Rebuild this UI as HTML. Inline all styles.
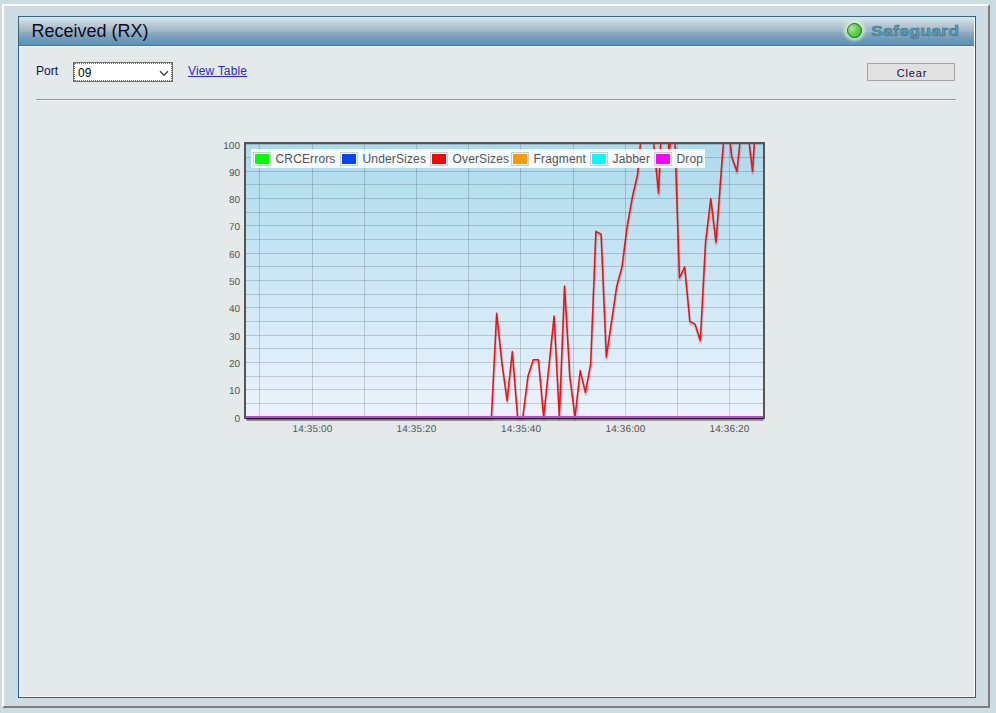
<!DOCTYPE html>
<html><head><meta charset="utf-8">
<style>
html,body{margin:0;padding:0;}
body{width:996px;height:713px;overflow:hidden;background:#cddce3;position:relative;font-family:"Liberation Sans",sans-serif;}
.frame{position:absolute;left:2px;top:4px;width:984px;height:700px;border-style:solid;border-width:2px;border-color:#ffffff #7c7c7c #7c7c7c #ffffff;background:#cddce3;}
.panel{position:absolute;left:18px;top:16px;width:956px;height:680px;border:1px solid #1b63a0;box-shadow:inset 0 0 0 1px #fafcfc;background:#e4e9ea;}
.hdr{position:absolute;left:19px;top:16px;width:955px;height:30px;background:linear-gradient(to bottom,#3d6578 0px,#3d6578 1px,#c6ecfc 1px,#c6ecfc 2px,#cae6f3 2px,#cae6f3 3px,#cce1ec 3px,#cce1ec 4px,#ccdce4 4px,#ccdce4 5px,#cad6dc 5px,#cad6dc 6px,#c7d2d6 6px,#c7d2d6 7px,#c4cfd2 7px,#c4cfd2 8px,#bccbd5 8px,#bccbd5 9px,#b6c8d5 9px,#b6c8d5 10px,#b0c4d3 10px,#b0c4d3 11px,#abc1d1 11px,#abc1d1 12px,#a7becf 12px,#a7becf 13px,#a4bccd 13px,#a4bccd 14px,#a2b9cb 14px,#a2b9cb 15px,#a0b4c4 15px,#a0b4c4 16px,#8dacc0 16px,#8dacc0 17px,#89aabf 17px,#89aabf 18px,#85a7be 18px,#85a7be 19px,#80a4bd 19px,#80a4bd 20px,#7ba1bc 20px,#7ba1bc 21px,#769fbc 21px,#769fbc 22px,#719cbb 22px,#719cbb 23px,#6c9abb 23px,#6c9abb 24px,#6898ba 24px,#6898ba 25px,#6497ba 25px,#6497ba 26px,#6096ba 26px,#6096ba 27px,#5d95b9 27px,#5d95b9 28px,#5a93b8 28px,#5a93b8 29px,#3b77a0 29px,#3b77a0 30px);}
.title{position:absolute;left:31.5px;top:21px;font-size:18px;color:#0c0c20;white-space:nowrap;}
.sg{position:absolute;left:847px;top:22.5px;width:15px;height:15px;box-sizing:border-box;border-radius:50%;border:1.6px solid #1f6f1f;background:radial-gradient(circle at 30% 35%,#b4e4a4 0,#62d24c 45%,#3fbe34 85%);box-shadow:0 0 3px 3px rgba(215,250,210,0.7);}
.sgt{position:absolute;left:871px;top:23px;font-size:14.5px;font-weight:bold;color:#5e9db3;letter-spacing:0.2px;transform:scaleX(1.215);transform-origin:left top;-webkit-text-stroke:0.55px #3a7388;white-space:nowrap;}
.lbl{position:absolute;font-size:12px;color:#10104a;white-space:nowrap;}
.sel{position:absolute;left:73px;top:62px;width:98px;height:18px;background:#fff;border:1px solid #6e6e6e;outline:1px dotted #7a7a7a;outline-offset:-2px;}
.sel .v{position:absolute;left:4px;top:3px;font-size:12px;color:#000;}
.link{position:absolute;left:188px;top:64px;font-size:12px;letter-spacing:0.15px;color:#2a2ad8;text-decoration:underline;white-space:nowrap;}
.btn{position:absolute;left:867px;top:63px;width:86px;height:16px;background:#e1e1e1;border:1px solid #a4a4a4;}
.btn span{position:absolute;left:2px;right:0;top:3px;text-align:center;font-size:11px;letter-spacing:0.8px;color:#101040;}
.hr1{position:absolute;left:36px;top:99px;width:920px;height:1px;background:#8c9c9c;}
.hr2{position:absolute;left:36px;top:100px;width:920px;height:1px;background:#f4f6f6;}
.yl{position:absolute;right:755.8px;font-size:10px;letter-spacing:0.1px;text-rendering:geometricPrecision;color:#545454;text-align:right;line-height:12px;}
.xl{position:absolute;width:60px;font-size:10px;letter-spacing:0.15px;text-rendering:geometricPrecision;color:#545454;text-align:center;line-height:12px;top:424px;}
.legend{position:absolute;left:251px;top:149px;height:19px;width:454px;background:rgba(255,255,255,0.9);}
.lg{position:absolute;top:152px;width:16px;height:12px;border:1px solid #ccc;}
.lg i{position:absolute;left:1px;top:1px;width:14px;height:10px;}
.lt{position:absolute;top:152px;font-size:12px;letter-spacing:0.15px;color:#545454;line-height:14px;white-space:nowrap;}
</style></head><body>
<div class="frame"></div>
<div class="panel"></div>
<div class="hdr"></div><div style="position:absolute;left:18px;top:16px;width:1px;height:30px;background:linear-gradient(#3e6579,#2f6890)"></div><div style="position:absolute;left:19px;top:46px;width:955px;height:1px;background:#f4f7f7"></div>
<div class="title">Received (RX)</div>
<div class="sg"></div>
<div class="sgt">Safeguard</div>
<div class="lbl" style="left:36px;top:64px;">Port</div>
<div class="sel"><span class="v">09</span><svg width="10" height="6" style="position:absolute;left:85px;top:6.5px" viewBox="0 0 10 6"><path d="M1 1.3L5 5.3L9 1.3" stroke="#3a3a3a" stroke-width="1.25" fill="none"/></svg></div>
<a class="link">View Table</a>
<div class="btn"><span>Clear</span></div>
<div class="hr1"></div><div class="hr2"></div>
<svg width="996" height="713" style="position:absolute;left:0;top:0">
<defs><linearGradient id="pg" x1="0" y1="0" x2="0" y2="1"><stop offset="0" stop-color="#acdbed"/><stop offset="1" stop-color="#ebf3fd"/></linearGradient></defs>
<rect x="246" y="144" width="517" height="273" fill="url(#pg)"/>
<path d="M246 417.5H763 M246 403.5H763 M246 389.5H763 M246 376.5H763 M246 362.5H763 M246 348.5H763 M246 335.5H763 M246 321.5H763 M246 307.5H763 M246 294.5H763 M246 280.5H763 M246 266.5H763 M246 253.5H763 M246 239.5H763 M246 225.5H763 M246 212.5H763 M246 198.5H763 M246 184.5H763 M246 171.5H763 M246 157.5H763 M246 144.5H763 M259.5 144V417 M312.5 144V417 M364.5 144V417 M416.5 144V417 M468.5 144V417 M520.5 144V417 M573.5 144V417 M625.5 144V417 M677.5 144V417 M729.5 144V417" stroke="rgba(0,0,0,0.16)" stroke-width="1" fill="none"/>
<rect x="245" y="143" width="519" height="275" fill="none" stroke="#545454" stroke-width="2"/>
<path d="M246.43 419.46 L251.66 419.46 L256.88 419.46 L262.10 419.46 L267.32 419.46 L272.55 419.46 L277.77 419.46 L282.99 419.46 L288.21 419.46 L293.43 419.46 L298.66 419.46 L303.88 419.46 L309.10 419.46 L314.32 419.46 L319.55 419.46 L324.77 419.46 L329.99 419.46 L335.21 419.46 L340.43 419.46 L345.66 419.46 L350.88 419.46 L356.10 419.46 L361.32 419.46 L366.55 419.46 L371.77 419.46 L376.99 419.46 L382.21 419.46 L387.43 419.46 L392.66 419.46 L397.88 419.46 L403.10 419.46 L408.32 419.46 L413.55 419.46 L418.77 419.46 L423.99 419.46 L429.21 419.46 L434.43 419.46 L439.66 419.46 L444.88 419.46 L450.10 419.46 L455.32 419.46 L460.55 419.46 L465.77 419.46 L470.99 419.46 L476.21 419.46 L481.43 419.46 L486.66 419.46 L491.88 419.46 L497.10 419.46 L502.32 419.46 L507.55 419.46 L512.77 419.46 L517.99 419.46 L523.21 419.46 L528.43 419.46 L533.66 419.46 L538.88 419.46 L544.10 419.46 L549.32 419.46 L554.55 419.46 L559.77 419.46 L564.99 419.46 L570.21 419.46 L575.43 419.46 L580.66 419.46 L585.88 419.46 L591.10 419.46 L596.32 419.46 L601.55 419.46 L606.77 419.46 L611.99 419.46 L617.21 419.46 L622.43 419.46 L627.66 419.46 L632.88 419.46 L638.10 419.46 L643.32 419.46 L648.55 419.46 L653.77 419.46 L658.99 419.46 L664.21 419.46 L669.43 419.46 L674.66 419.46 L679.88 419.46 L685.10 419.46 L690.32 419.46 L695.55 419.46 L700.77 419.46 L705.99 419.46 L711.21 419.46 L716.43 419.46 L721.66 419.46 L726.88 419.46 L732.10 419.46 L737.32 419.46 L742.55 419.46 L747.77 419.46 L752.99 419.46 L758.21 419.46 L763.43 419.46" stroke="rgba(0,0,0,0.075)" stroke-width="3" fill="none" stroke-linejoin="round"/>
<path d="M246.30 418.72 L251.53 418.72 L256.75 418.72 L261.97 418.72 L267.19 418.72 L272.41 418.72 L277.64 418.72 L282.86 418.72 L288.08 418.72 L293.30 418.72 L298.53 418.72 L303.75 418.72 L308.97 418.72 L314.19 418.72 L319.41 418.72 L324.64 418.72 L329.86 418.72 L335.08 418.72 L340.30 418.72 L345.53 418.72 L350.75 418.72 L355.97 418.72 L361.19 418.72 L366.41 418.72 L371.64 418.72 L376.86 418.72 L382.08 418.72 L387.30 418.72 L392.53 418.72 L397.75 418.72 L402.97 418.72 L408.19 418.72 L413.41 418.72 L418.64 418.72 L423.86 418.72 L429.08 418.72 L434.30 418.72 L439.53 418.72 L444.75 418.72 L449.97 418.72 L455.19 418.72 L460.41 418.72 L465.64 418.72 L470.86 418.72 L476.08 418.72 L481.30 418.72 L486.53 418.72 L491.75 418.72 L496.97 418.72 L502.19 418.72 L507.41 418.72 L512.64 418.72 L517.86 418.72 L523.08 418.72 L528.30 418.72 L533.53 418.72 L538.75 418.72 L543.97 418.72 L549.19 418.72 L554.41 418.72 L559.64 418.72 L564.86 418.72 L570.08 418.72 L575.30 418.72 L580.53 418.72 L585.75 418.72 L590.97 418.72 L596.19 418.72 L601.41 418.72 L606.64 418.72 L611.86 418.72 L617.08 418.72 L622.30 418.72 L627.53 418.72 L632.75 418.72 L637.97 418.72 L643.19 418.72 L648.41 418.72 L653.64 418.72 L658.86 418.72 L664.08 418.72 L669.30 418.72 L674.53 418.72 L679.75 418.72 L684.97 418.72 L690.19 418.72 L695.41 418.72 L700.64 418.72 L705.86 418.72 L711.08 418.72 L716.30 418.72 L721.53 418.72 L726.75 418.72 L731.97 418.72 L737.19 418.72 L742.41 418.72 L747.64 418.72 L752.86 418.72 L758.08 418.72 L763.30 418.72" stroke="rgba(0,0,0,0.075)" stroke-width="1.5" fill="none" stroke-linejoin="round"/>
<path d="M246.00 417.00 L251.22 417.00 L256.44 417.00 L261.67 417.00 L266.89 417.00 L272.11 417.00 L277.33 417.00 L282.56 417.00 L287.78 417.00 L293.00 417.00 L298.22 417.00 L303.44 417.00 L308.67 417.00 L313.89 417.00 L319.11 417.00 L324.33 417.00 L329.56 417.00 L334.78 417.00 L340.00 417.00 L345.22 417.00 L350.44 417.00 L355.67 417.00 L360.89 417.00 L366.11 417.00 L371.33 417.00 L376.56 417.00 L381.78 417.00 L387.00 417.00 L392.22 417.00 L397.44 417.00 L402.67 417.00 L407.89 417.00 L413.11 417.00 L418.33 417.00 L423.56 417.00 L428.78 417.00 L434.00 417.00 L439.22 417.00 L444.44 417.00 L449.67 417.00 L454.89 417.00 L460.11 417.00 L465.33 417.00 L470.56 417.00 L475.78 417.00 L481.00 417.00 L486.22 417.00 L491.44 417.00 L496.67 417.00 L501.89 417.00 L507.11 417.00 L512.33 417.00 L517.56 417.00 L522.78 417.00 L528.00 417.00 L533.22 417.00 L538.44 417.00 L543.67 417.00 L548.89 417.00 L554.11 417.00 L559.33 417.00 L564.56 417.00 L569.78 417.00 L575.00 417.00 L580.22 417.00 L585.44 417.00 L590.67 417.00 L595.89 417.00 L601.11 417.00 L606.33 417.00 L611.56 417.00 L616.78 417.00 L622.00 417.00 L627.22 417.00 L632.44 417.00 L637.67 417.00 L642.89 417.00 L648.11 417.00 L653.33 417.00 L658.56 417.00 L663.78 417.00 L669.00 417.00 L674.22 417.00 L679.44 417.00 L684.67 417.00 L689.89 417.00 L695.11 417.00 L700.33 417.00 L705.56 417.00 L710.78 417.00 L716.00 417.00 L721.22 417.00 L726.44 417.00 L731.67 417.00 L736.89 417.00 L742.11 417.00 L747.33 417.00 L752.56 417.00 L757.78 417.00 L763.00 417.00" stroke="#00ff00" stroke-width="2" fill="none" stroke-linejoin="round"/>
<path d="M246.43 419.46 L251.66 419.46 L256.88 419.46 L262.10 419.46 L267.32 419.46 L272.55 419.46 L277.77 419.46 L282.99 419.46 L288.21 419.46 L293.43 419.46 L298.66 419.46 L303.88 419.46 L309.10 419.46 L314.32 419.46 L319.55 419.46 L324.77 419.46 L329.99 419.46 L335.21 419.46 L340.43 419.46 L345.66 419.46 L350.88 419.46 L356.10 419.46 L361.32 419.46 L366.55 419.46 L371.77 419.46 L376.99 419.46 L382.21 419.46 L387.43 419.46 L392.66 419.46 L397.88 419.46 L403.10 419.46 L408.32 419.46 L413.55 419.46 L418.77 419.46 L423.99 419.46 L429.21 419.46 L434.43 419.46 L439.66 419.46 L444.88 419.46 L450.10 419.46 L455.32 419.46 L460.55 419.46 L465.77 419.46 L470.99 419.46 L476.21 419.46 L481.43 419.46 L486.66 419.46 L491.88 419.46 L497.10 419.46 L502.32 419.46 L507.55 419.46 L512.77 419.46 L517.99 419.46 L523.21 419.46 L528.43 419.46 L533.66 419.46 L538.88 419.46 L544.10 419.46 L549.32 419.46 L554.55 419.46 L559.77 419.46 L564.99 419.46 L570.21 419.46 L575.43 419.46 L580.66 419.46 L585.88 419.46 L591.10 419.46 L596.32 419.46 L601.55 419.46 L606.77 419.46 L611.99 419.46 L617.21 419.46 L622.43 419.46 L627.66 419.46 L632.88 419.46 L638.10 419.46 L643.32 419.46 L648.55 419.46 L653.77 419.46 L658.99 419.46 L664.21 419.46 L669.43 419.46 L674.66 419.46 L679.88 419.46 L685.10 419.46 L690.32 419.46 L695.55 419.46 L700.77 419.46 L705.99 419.46 L711.21 419.46 L716.43 419.46 L721.66 419.46 L726.88 419.46 L732.10 419.46 L737.32 419.46 L742.55 419.46 L747.77 419.46 L752.99 419.46 L758.21 419.46 L763.43 419.46" stroke="rgba(0,0,0,0.075)" stroke-width="3" fill="none" stroke-linejoin="round"/>
<path d="M246.30 418.72 L251.53 418.72 L256.75 418.72 L261.97 418.72 L267.19 418.72 L272.41 418.72 L277.64 418.72 L282.86 418.72 L288.08 418.72 L293.30 418.72 L298.53 418.72 L303.75 418.72 L308.97 418.72 L314.19 418.72 L319.41 418.72 L324.64 418.72 L329.86 418.72 L335.08 418.72 L340.30 418.72 L345.53 418.72 L350.75 418.72 L355.97 418.72 L361.19 418.72 L366.41 418.72 L371.64 418.72 L376.86 418.72 L382.08 418.72 L387.30 418.72 L392.53 418.72 L397.75 418.72 L402.97 418.72 L408.19 418.72 L413.41 418.72 L418.64 418.72 L423.86 418.72 L429.08 418.72 L434.30 418.72 L439.53 418.72 L444.75 418.72 L449.97 418.72 L455.19 418.72 L460.41 418.72 L465.64 418.72 L470.86 418.72 L476.08 418.72 L481.30 418.72 L486.53 418.72 L491.75 418.72 L496.97 418.72 L502.19 418.72 L507.41 418.72 L512.64 418.72 L517.86 418.72 L523.08 418.72 L528.30 418.72 L533.53 418.72 L538.75 418.72 L543.97 418.72 L549.19 418.72 L554.41 418.72 L559.64 418.72 L564.86 418.72 L570.08 418.72 L575.30 418.72 L580.53 418.72 L585.75 418.72 L590.97 418.72 L596.19 418.72 L601.41 418.72 L606.64 418.72 L611.86 418.72 L617.08 418.72 L622.30 418.72 L627.53 418.72 L632.75 418.72 L637.97 418.72 L643.19 418.72 L648.41 418.72 L653.64 418.72 L658.86 418.72 L664.08 418.72 L669.30 418.72 L674.53 418.72 L679.75 418.72 L684.97 418.72 L690.19 418.72 L695.41 418.72 L700.64 418.72 L705.86 418.72 L711.08 418.72 L716.30 418.72 L721.53 418.72 L726.75 418.72 L731.97 418.72 L737.19 418.72 L742.41 418.72 L747.64 418.72 L752.86 418.72 L758.08 418.72 L763.30 418.72" stroke="rgba(0,0,0,0.075)" stroke-width="1.5" fill="none" stroke-linejoin="round"/>
<path d="M246.00 417.00 L251.22 417.00 L256.44 417.00 L261.67 417.00 L266.89 417.00 L272.11 417.00 L277.33 417.00 L282.56 417.00 L287.78 417.00 L293.00 417.00 L298.22 417.00 L303.44 417.00 L308.67 417.00 L313.89 417.00 L319.11 417.00 L324.33 417.00 L329.56 417.00 L334.78 417.00 L340.00 417.00 L345.22 417.00 L350.44 417.00 L355.67 417.00 L360.89 417.00 L366.11 417.00 L371.33 417.00 L376.56 417.00 L381.78 417.00 L387.00 417.00 L392.22 417.00 L397.44 417.00 L402.67 417.00 L407.89 417.00 L413.11 417.00 L418.33 417.00 L423.56 417.00 L428.78 417.00 L434.00 417.00 L439.22 417.00 L444.44 417.00 L449.67 417.00 L454.89 417.00 L460.11 417.00 L465.33 417.00 L470.56 417.00 L475.78 417.00 L481.00 417.00 L486.22 417.00 L491.44 417.00 L496.67 417.00 L501.89 417.00 L507.11 417.00 L512.33 417.00 L517.56 417.00 L522.78 417.00 L528.00 417.00 L533.22 417.00 L538.44 417.00 L543.67 417.00 L548.89 417.00 L554.11 417.00 L559.33 417.00 L564.56 417.00 L569.78 417.00 L575.00 417.00 L580.22 417.00 L585.44 417.00 L590.67 417.00 L595.89 417.00 L601.11 417.00 L606.33 417.00 L611.56 417.00 L616.78 417.00 L622.00 417.00 L627.22 417.00 L632.44 417.00 L637.67 417.00 L642.89 417.00 L648.11 417.00 L653.33 417.00 L658.56 417.00 L663.78 417.00 L669.00 417.00 L674.22 417.00 L679.44 417.00 L684.67 417.00 L689.89 417.00 L695.11 417.00 L700.33 417.00 L705.56 417.00 L710.78 417.00 L716.00 417.00 L721.22 417.00 L726.44 417.00 L731.67 417.00 L736.89 417.00 L742.11 417.00 L747.33 417.00 L752.56 417.00 L757.78 417.00 L763.00 417.00" stroke="#0044ff" stroke-width="2" fill="none" stroke-linejoin="round"/>
<path d="M246.39 419.22 L251.61 419.22 L256.84 419.22 L262.06 419.22 L267.28 419.22 L272.50 419.22 L277.72 419.22 L282.95 419.22 L288.17 419.22 L293.39 419.22 L298.61 419.22 L303.84 419.22 L309.06 419.22 L314.28 419.22 L319.50 419.22 L324.72 419.22 L329.95 419.22 L335.17 419.22 L340.39 419.22 L345.61 419.22 L350.84 419.22 L356.06 419.22 L361.28 419.22 L366.50 419.22 L371.72 419.22 L376.95 419.22 L382.17 419.22 L387.39 419.22 L392.61 419.22 L397.84 419.22 L403.06 419.22 L408.28 419.22 L413.50 419.22 L418.72 419.22 L423.95 419.22 L429.17 419.22 L434.39 419.22 L439.61 419.22 L444.84 419.22 L450.06 419.22 L455.28 419.22 L460.50 419.22 L465.72 419.22 L470.95 419.22 L476.17 419.22 L481.39 419.22 L486.61 419.22 L491.84 419.22 L497.06 315.48 L502.28 364.62 L507.50 402.84 L512.72 353.70 L517.95 419.22 L523.17 419.22 L528.39 378.27 L533.61 361.89 L538.84 361.89 L544.06 419.22 L549.28 368.71 L554.50 318.21 L559.72 419.22 L564.95 288.18 L570.17 378.27 L575.39 419.22 L580.61 372.81 L585.84 394.65 L591.06 365.98 L596.28 233.58 L601.50 236.31 L606.72 359.16 L611.95 323.67 L617.17 288.18 L622.39 269.07 L627.61 228.12 L632.84 198.90 L638.06 176.25 L640.79 146.22 M654.17 146.22 L658.95 195.36 L660.99 146.22 M668.89 146.22 L669.39 154.41 L670.70 146.22 M675.42 146.22 L679.84 279.99 L685.06 269.07 L690.28 323.67 L695.50 326.40 L700.72 342.78 L705.95 244.50 L711.17 200.82 L716.39 244.50 L721.61 173.52 L723.79 146.22 M730.77 146.22 L732.06 158.77 L737.28 173.52 L740.18 146.22 M749.68 146.22 L752.95 173.52 L754.69 146.22" stroke="rgba(0,0,0,0.1)" stroke-width="3" fill="none" stroke-linejoin="round"/>
<path d="M246.26 418.48 L251.48 418.48 L256.70 418.48 L261.93 418.48 L267.15 418.48 L272.37 418.48 L277.59 418.48 L282.82 418.48 L288.04 418.48 L293.26 418.48 L298.48 418.48 L303.70 418.48 L308.93 418.48 L314.15 418.48 L319.37 418.48 L324.59 418.48 L329.82 418.48 L335.04 418.48 L340.26 418.48 L345.48 418.48 L350.70 418.48 L355.93 418.48 L361.15 418.48 L366.37 418.48 L371.59 418.48 L376.82 418.48 L382.04 418.48 L387.26 418.48 L392.48 418.48 L397.70 418.48 L402.93 418.48 L408.15 418.48 L413.37 418.48 L418.59 418.48 L423.82 418.48 L429.04 418.48 L434.26 418.48 L439.48 418.48 L444.70 418.48 L449.93 418.48 L455.15 418.48 L460.37 418.48 L465.59 418.48 L470.82 418.48 L476.04 418.48 L481.26 418.48 L486.48 418.48 L491.70 418.48 L496.93 314.74 L502.15 363.88 L507.37 402.10 L512.59 352.96 L517.82 418.48 L523.04 418.48 L528.26 377.53 L533.48 361.15 L538.70 361.15 L543.93 418.48 L549.15 367.97 L554.37 317.47 L559.59 418.48 L564.82 287.44 L570.04 377.53 L575.26 418.48 L580.48 372.07 L585.70 393.91 L590.93 365.24 L596.15 232.84 L601.37 235.57 L606.59 358.42 L611.82 322.93 L617.04 287.44 L622.26 268.33 L627.48 227.38 L632.70 198.17 L637.93 175.51 L640.66 145.48 M654.04 145.48 L658.82 194.62 L660.86 145.48 M668.76 145.48 L669.26 153.67 L670.57 145.48 M675.29 145.48 L679.70 279.25 L684.93 268.33 L690.15 322.93 L695.37 325.66 L700.59 342.04 L705.82 243.76 L711.04 200.08 L716.26 243.76 L721.48 172.78 L723.66 145.48 M730.64 145.48 L731.93 158.04 L737.15 172.78 L740.05 145.48 M749.55 145.48 L752.82 172.78 L754.56 145.48" stroke="rgba(0,0,0,0.1)" stroke-width="1.5" fill="none" stroke-linejoin="round"/>
<path d="M246.00 417.00 L251.22 417.00 L256.44 417.00 L261.67 417.00 L266.89 417.00 L272.11 417.00 L277.33 417.00 L282.56 417.00 L287.78 417.00 L293.00 417.00 L298.22 417.00 L303.44 417.00 L308.67 417.00 L313.89 417.00 L319.11 417.00 L324.33 417.00 L329.56 417.00 L334.78 417.00 L340.00 417.00 L345.22 417.00 L350.44 417.00 L355.67 417.00 L360.89 417.00 L366.11 417.00 L371.33 417.00 L376.56 417.00 L381.78 417.00 L387.00 417.00 L392.22 417.00 L397.44 417.00 L402.67 417.00 L407.89 417.00 L413.11 417.00 L418.33 417.00 L423.56 417.00 L428.78 417.00 L434.00 417.00 L439.22 417.00 L444.44 417.00 L449.67 417.00 L454.89 417.00 L460.11 417.00 L465.33 417.00 L470.56 417.00 L475.78 417.00 L481.00 417.00 L486.22 417.00 L491.44 417.00 L496.67 313.26 L501.89 362.40 L507.11 400.62 L512.33 351.48 L517.56 417.00 L522.78 417.00 L528.00 376.05 L533.22 359.67 L538.44 359.67 L543.67 417.00 L548.89 366.50 L554.11 315.99 L559.33 417.00 L564.56 285.96 L569.78 376.05 L575.00 417.00 L580.22 370.59 L585.44 392.43 L590.67 363.76 L595.89 231.36 L601.11 234.09 L606.33 356.94 L611.56 321.45 L616.78 285.96 L622.00 266.85 L627.22 225.90 L632.44 196.69 L637.67 174.03 L640.40 144.00 M653.78 144.00 L658.56 193.14 L660.60 144.00 M668.49 144.00 L669.00 152.19 L670.31 144.00 M675.03 144.00 L679.44 277.77 L684.67 266.85 L689.89 321.45 L695.11 324.18 L700.33 340.56 L705.56 242.28 L710.78 198.60 L716.00 242.28 L721.22 171.30 L723.40 144.00 M730.38 144.00 L731.67 156.56 L736.89 171.30 L739.79 144.00 M749.29 144.00 L752.56 171.30 L754.30 144.00" stroke="#ff0a0a" stroke-width="1.5" fill="none" stroke-linejoin="round"/>
<path d="M246.43 419.46 L251.66 419.46 L256.88 419.46 L262.10 419.46 L267.32 419.46 L272.55 419.46 L277.77 419.46 L282.99 419.46 L288.21 419.46 L293.43 419.46 L298.66 419.46 L303.88 419.46 L309.10 419.46 L314.32 419.46 L319.55 419.46 L324.77 419.46 L329.99 419.46 L335.21 419.46 L340.43 419.46 L345.66 419.46 L350.88 419.46 L356.10 419.46 L361.32 419.46 L366.55 419.46 L371.77 419.46 L376.99 419.46 L382.21 419.46 L387.43 419.46 L392.66 419.46 L397.88 419.46 L403.10 419.46 L408.32 419.46 L413.55 419.46 L418.77 419.46 L423.99 419.46 L429.21 419.46 L434.43 419.46 L439.66 419.46 L444.88 419.46 L450.10 419.46 L455.32 419.46 L460.55 419.46 L465.77 419.46 L470.99 419.46 L476.21 419.46 L481.43 419.46 L486.66 419.46 L491.88 419.46 L497.10 419.46 L502.32 419.46 L507.55 419.46 L512.77 419.46 L517.99 419.46 L523.21 419.46 L528.43 419.46 L533.66 419.46 L538.88 419.46 L544.10 419.46 L549.32 419.46 L554.55 419.46 L559.77 419.46 L564.99 419.46 L570.21 419.46 L575.43 419.46 L580.66 419.46 L585.88 419.46 L591.10 419.46 L596.32 419.46 L601.55 419.46 L606.77 419.46 L611.99 419.46 L617.21 419.46 L622.43 419.46 L627.66 419.46 L632.88 419.46 L638.10 419.46 L643.32 419.46 L648.55 419.46 L653.77 419.46 L658.99 419.46 L664.21 419.46 L669.43 419.46 L674.66 419.46 L679.88 419.46 L685.10 419.46 L690.32 419.46 L695.55 419.46 L700.77 419.46 L705.99 419.46 L711.21 419.46 L716.43 419.46 L721.66 419.46 L726.88 419.46 L732.10 419.46 L737.32 419.46 L742.55 419.46 L747.77 419.46 L752.99 419.46 L758.21 419.46 L763.43 419.46" stroke="rgba(0,0,0,0.075)" stroke-width="3" fill="none" stroke-linejoin="round"/>
<path d="M246.30 418.72 L251.53 418.72 L256.75 418.72 L261.97 418.72 L267.19 418.72 L272.41 418.72 L277.64 418.72 L282.86 418.72 L288.08 418.72 L293.30 418.72 L298.53 418.72 L303.75 418.72 L308.97 418.72 L314.19 418.72 L319.41 418.72 L324.64 418.72 L329.86 418.72 L335.08 418.72 L340.30 418.72 L345.53 418.72 L350.75 418.72 L355.97 418.72 L361.19 418.72 L366.41 418.72 L371.64 418.72 L376.86 418.72 L382.08 418.72 L387.30 418.72 L392.53 418.72 L397.75 418.72 L402.97 418.72 L408.19 418.72 L413.41 418.72 L418.64 418.72 L423.86 418.72 L429.08 418.72 L434.30 418.72 L439.53 418.72 L444.75 418.72 L449.97 418.72 L455.19 418.72 L460.41 418.72 L465.64 418.72 L470.86 418.72 L476.08 418.72 L481.30 418.72 L486.53 418.72 L491.75 418.72 L496.97 418.72 L502.19 418.72 L507.41 418.72 L512.64 418.72 L517.86 418.72 L523.08 418.72 L528.30 418.72 L533.53 418.72 L538.75 418.72 L543.97 418.72 L549.19 418.72 L554.41 418.72 L559.64 418.72 L564.86 418.72 L570.08 418.72 L575.30 418.72 L580.53 418.72 L585.75 418.72 L590.97 418.72 L596.19 418.72 L601.41 418.72 L606.64 418.72 L611.86 418.72 L617.08 418.72 L622.30 418.72 L627.53 418.72 L632.75 418.72 L637.97 418.72 L643.19 418.72 L648.41 418.72 L653.64 418.72 L658.86 418.72 L664.08 418.72 L669.30 418.72 L674.53 418.72 L679.75 418.72 L684.97 418.72 L690.19 418.72 L695.41 418.72 L700.64 418.72 L705.86 418.72 L711.08 418.72 L716.30 418.72 L721.53 418.72 L726.75 418.72 L731.97 418.72 L737.19 418.72 L742.41 418.72 L747.64 418.72 L752.86 418.72 L758.08 418.72 L763.30 418.72" stroke="rgba(0,0,0,0.075)" stroke-width="1.5" fill="none" stroke-linejoin="round"/>
<path d="M246.00 417.00 L251.22 417.00 L256.44 417.00 L261.67 417.00 L266.89 417.00 L272.11 417.00 L277.33 417.00 L282.56 417.00 L287.78 417.00 L293.00 417.00 L298.22 417.00 L303.44 417.00 L308.67 417.00 L313.89 417.00 L319.11 417.00 L324.33 417.00 L329.56 417.00 L334.78 417.00 L340.00 417.00 L345.22 417.00 L350.44 417.00 L355.67 417.00 L360.89 417.00 L366.11 417.00 L371.33 417.00 L376.56 417.00 L381.78 417.00 L387.00 417.00 L392.22 417.00 L397.44 417.00 L402.67 417.00 L407.89 417.00 L413.11 417.00 L418.33 417.00 L423.56 417.00 L428.78 417.00 L434.00 417.00 L439.22 417.00 L444.44 417.00 L449.67 417.00 L454.89 417.00 L460.11 417.00 L465.33 417.00 L470.56 417.00 L475.78 417.00 L481.00 417.00 L486.22 417.00 L491.44 417.00 L496.67 417.00 L501.89 417.00 L507.11 417.00 L512.33 417.00 L517.56 417.00 L522.78 417.00 L528.00 417.00 L533.22 417.00 L538.44 417.00 L543.67 417.00 L548.89 417.00 L554.11 417.00 L559.33 417.00 L564.56 417.00 L569.78 417.00 L575.00 417.00 L580.22 417.00 L585.44 417.00 L590.67 417.00 L595.89 417.00 L601.11 417.00 L606.33 417.00 L611.56 417.00 L616.78 417.00 L622.00 417.00 L627.22 417.00 L632.44 417.00 L637.67 417.00 L642.89 417.00 L648.11 417.00 L653.33 417.00 L658.56 417.00 L663.78 417.00 L669.00 417.00 L674.22 417.00 L679.44 417.00 L684.67 417.00 L689.89 417.00 L695.11 417.00 L700.33 417.00 L705.56 417.00 L710.78 417.00 L716.00 417.00 L721.22 417.00 L726.44 417.00 L731.67 417.00 L736.89 417.00 L742.11 417.00 L747.33 417.00 L752.56 417.00 L757.78 417.00 L763.00 417.00" stroke="#ff9900" stroke-width="2" fill="none" stroke-linejoin="round"/>
<path d="M246.43 419.46 L251.66 419.46 L256.88 419.46 L262.10 419.46 L267.32 419.46 L272.55 419.46 L277.77 419.46 L282.99 419.46 L288.21 419.46 L293.43 419.46 L298.66 419.46 L303.88 419.46 L309.10 419.46 L314.32 419.46 L319.55 419.46 L324.77 419.46 L329.99 419.46 L335.21 419.46 L340.43 419.46 L345.66 419.46 L350.88 419.46 L356.10 419.46 L361.32 419.46 L366.55 419.46 L371.77 419.46 L376.99 419.46 L382.21 419.46 L387.43 419.46 L392.66 419.46 L397.88 419.46 L403.10 419.46 L408.32 419.46 L413.55 419.46 L418.77 419.46 L423.99 419.46 L429.21 419.46 L434.43 419.46 L439.66 419.46 L444.88 419.46 L450.10 419.46 L455.32 419.46 L460.55 419.46 L465.77 419.46 L470.99 419.46 L476.21 419.46 L481.43 419.46 L486.66 419.46 L491.88 419.46 L497.10 419.46 L502.32 419.46 L507.55 419.46 L512.77 419.46 L517.99 419.46 L523.21 419.46 L528.43 419.46 L533.66 419.46 L538.88 419.46 L544.10 419.46 L549.32 419.46 L554.55 419.46 L559.77 419.46 L564.99 419.46 L570.21 419.46 L575.43 419.46 L580.66 419.46 L585.88 419.46 L591.10 419.46 L596.32 419.46 L601.55 419.46 L606.77 419.46 L611.99 419.46 L617.21 419.46 L622.43 419.46 L627.66 419.46 L632.88 419.46 L638.10 419.46 L643.32 419.46 L648.55 419.46 L653.77 419.46 L658.99 419.46 L664.21 419.46 L669.43 419.46 L674.66 419.46 L679.88 419.46 L685.10 419.46 L690.32 419.46 L695.55 419.46 L700.77 419.46 L705.99 419.46 L711.21 419.46 L716.43 419.46 L721.66 419.46 L726.88 419.46 L732.10 419.46 L737.32 419.46 L742.55 419.46 L747.77 419.46 L752.99 419.46 L758.21 419.46 L763.43 419.46" stroke="rgba(0,0,0,0.075)" stroke-width="3" fill="none" stroke-linejoin="round"/>
<path d="M246.30 418.72 L251.53 418.72 L256.75 418.72 L261.97 418.72 L267.19 418.72 L272.41 418.72 L277.64 418.72 L282.86 418.72 L288.08 418.72 L293.30 418.72 L298.53 418.72 L303.75 418.72 L308.97 418.72 L314.19 418.72 L319.41 418.72 L324.64 418.72 L329.86 418.72 L335.08 418.72 L340.30 418.72 L345.53 418.72 L350.75 418.72 L355.97 418.72 L361.19 418.72 L366.41 418.72 L371.64 418.72 L376.86 418.72 L382.08 418.72 L387.30 418.72 L392.53 418.72 L397.75 418.72 L402.97 418.72 L408.19 418.72 L413.41 418.72 L418.64 418.72 L423.86 418.72 L429.08 418.72 L434.30 418.72 L439.53 418.72 L444.75 418.72 L449.97 418.72 L455.19 418.72 L460.41 418.72 L465.64 418.72 L470.86 418.72 L476.08 418.72 L481.30 418.72 L486.53 418.72 L491.75 418.72 L496.97 418.72 L502.19 418.72 L507.41 418.72 L512.64 418.72 L517.86 418.72 L523.08 418.72 L528.30 418.72 L533.53 418.72 L538.75 418.72 L543.97 418.72 L549.19 418.72 L554.41 418.72 L559.64 418.72 L564.86 418.72 L570.08 418.72 L575.30 418.72 L580.53 418.72 L585.75 418.72 L590.97 418.72 L596.19 418.72 L601.41 418.72 L606.64 418.72 L611.86 418.72 L617.08 418.72 L622.30 418.72 L627.53 418.72 L632.75 418.72 L637.97 418.72 L643.19 418.72 L648.41 418.72 L653.64 418.72 L658.86 418.72 L664.08 418.72 L669.30 418.72 L674.53 418.72 L679.75 418.72 L684.97 418.72 L690.19 418.72 L695.41 418.72 L700.64 418.72 L705.86 418.72 L711.08 418.72 L716.30 418.72 L721.53 418.72 L726.75 418.72 L731.97 418.72 L737.19 418.72 L742.41 418.72 L747.64 418.72 L752.86 418.72 L758.08 418.72 L763.30 418.72" stroke="rgba(0,0,0,0.075)" stroke-width="1.5" fill="none" stroke-linejoin="round"/>
<path d="M246.00 417.00 L251.22 417.00 L256.44 417.00 L261.67 417.00 L266.89 417.00 L272.11 417.00 L277.33 417.00 L282.56 417.00 L287.78 417.00 L293.00 417.00 L298.22 417.00 L303.44 417.00 L308.67 417.00 L313.89 417.00 L319.11 417.00 L324.33 417.00 L329.56 417.00 L334.78 417.00 L340.00 417.00 L345.22 417.00 L350.44 417.00 L355.67 417.00 L360.89 417.00 L366.11 417.00 L371.33 417.00 L376.56 417.00 L381.78 417.00 L387.00 417.00 L392.22 417.00 L397.44 417.00 L402.67 417.00 L407.89 417.00 L413.11 417.00 L418.33 417.00 L423.56 417.00 L428.78 417.00 L434.00 417.00 L439.22 417.00 L444.44 417.00 L449.67 417.00 L454.89 417.00 L460.11 417.00 L465.33 417.00 L470.56 417.00 L475.78 417.00 L481.00 417.00 L486.22 417.00 L491.44 417.00 L496.67 417.00 L501.89 417.00 L507.11 417.00 L512.33 417.00 L517.56 417.00 L522.78 417.00 L528.00 417.00 L533.22 417.00 L538.44 417.00 L543.67 417.00 L548.89 417.00 L554.11 417.00 L559.33 417.00 L564.56 417.00 L569.78 417.00 L575.00 417.00 L580.22 417.00 L585.44 417.00 L590.67 417.00 L595.89 417.00 L601.11 417.00 L606.33 417.00 L611.56 417.00 L616.78 417.00 L622.00 417.00 L627.22 417.00 L632.44 417.00 L637.67 417.00 L642.89 417.00 L648.11 417.00 L653.33 417.00 L658.56 417.00 L663.78 417.00 L669.00 417.00 L674.22 417.00 L679.44 417.00 L684.67 417.00 L689.89 417.00 L695.11 417.00 L700.33 417.00 L705.56 417.00 L710.78 417.00 L716.00 417.00 L721.22 417.00 L726.44 417.00 L731.67 417.00 L736.89 417.00 L742.11 417.00 L747.33 417.00 L752.56 417.00 L757.78 417.00 L763.00 417.00" stroke="#00ffff" stroke-width="2" fill="none" stroke-linejoin="round"/>
<path d="M246.43 419.46 L251.66 419.46 L256.88 419.46 L262.10 419.46 L267.32 419.46 L272.55 419.46 L277.77 419.46 L282.99 419.46 L288.21 419.46 L293.43 419.46 L298.66 419.46 L303.88 419.46 L309.10 419.46 L314.32 419.46 L319.55 419.46 L324.77 419.46 L329.99 419.46 L335.21 419.46 L340.43 419.46 L345.66 419.46 L350.88 419.46 L356.10 419.46 L361.32 419.46 L366.55 419.46 L371.77 419.46 L376.99 419.46 L382.21 419.46 L387.43 419.46 L392.66 419.46 L397.88 419.46 L403.10 419.46 L408.32 419.46 L413.55 419.46 L418.77 419.46 L423.99 419.46 L429.21 419.46 L434.43 419.46 L439.66 419.46 L444.88 419.46 L450.10 419.46 L455.32 419.46 L460.55 419.46 L465.77 419.46 L470.99 419.46 L476.21 419.46 L481.43 419.46 L486.66 419.46 L491.88 419.46 L497.10 419.46 L502.32 419.46 L507.55 419.46 L512.77 419.46 L517.99 419.46 L523.21 419.46 L528.43 419.46 L533.66 419.46 L538.88 419.46 L544.10 419.46 L549.32 419.46 L554.55 419.46 L559.77 419.46 L564.99 419.46 L570.21 419.46 L575.43 419.46 L580.66 419.46 L585.88 419.46 L591.10 419.46 L596.32 419.46 L601.55 419.46 L606.77 419.46 L611.99 419.46 L617.21 419.46 L622.43 419.46 L627.66 419.46 L632.88 419.46 L638.10 419.46 L643.32 419.46 L648.55 419.46 L653.77 419.46 L658.99 419.46 L664.21 419.46 L669.43 419.46 L674.66 419.46 L679.88 419.46 L685.10 419.46 L690.32 419.46 L695.55 419.46 L700.77 419.46 L705.99 419.46 L711.21 419.46 L716.43 419.46 L721.66 419.46 L726.88 419.46 L732.10 419.46 L737.32 419.46 L742.55 419.46 L747.77 419.46 L752.99 419.46 L758.21 419.46 L763.43 419.46" stroke="rgba(0,0,0,0.075)" stroke-width="3" fill="none" stroke-linejoin="round"/>
<path d="M246.30 418.72 L251.53 418.72 L256.75 418.72 L261.97 418.72 L267.19 418.72 L272.41 418.72 L277.64 418.72 L282.86 418.72 L288.08 418.72 L293.30 418.72 L298.53 418.72 L303.75 418.72 L308.97 418.72 L314.19 418.72 L319.41 418.72 L324.64 418.72 L329.86 418.72 L335.08 418.72 L340.30 418.72 L345.53 418.72 L350.75 418.72 L355.97 418.72 L361.19 418.72 L366.41 418.72 L371.64 418.72 L376.86 418.72 L382.08 418.72 L387.30 418.72 L392.53 418.72 L397.75 418.72 L402.97 418.72 L408.19 418.72 L413.41 418.72 L418.64 418.72 L423.86 418.72 L429.08 418.72 L434.30 418.72 L439.53 418.72 L444.75 418.72 L449.97 418.72 L455.19 418.72 L460.41 418.72 L465.64 418.72 L470.86 418.72 L476.08 418.72 L481.30 418.72 L486.53 418.72 L491.75 418.72 L496.97 418.72 L502.19 418.72 L507.41 418.72 L512.64 418.72 L517.86 418.72 L523.08 418.72 L528.30 418.72 L533.53 418.72 L538.75 418.72 L543.97 418.72 L549.19 418.72 L554.41 418.72 L559.64 418.72 L564.86 418.72 L570.08 418.72 L575.30 418.72 L580.53 418.72 L585.75 418.72 L590.97 418.72 L596.19 418.72 L601.41 418.72 L606.64 418.72 L611.86 418.72 L617.08 418.72 L622.30 418.72 L627.53 418.72 L632.75 418.72 L637.97 418.72 L643.19 418.72 L648.41 418.72 L653.64 418.72 L658.86 418.72 L664.08 418.72 L669.30 418.72 L674.53 418.72 L679.75 418.72 L684.97 418.72 L690.19 418.72 L695.41 418.72 L700.64 418.72 L705.86 418.72 L711.08 418.72 L716.30 418.72 L721.53 418.72 L726.75 418.72 L731.97 418.72 L737.19 418.72 L742.41 418.72 L747.64 418.72 L752.86 418.72 L758.08 418.72 L763.30 418.72" stroke="rgba(0,0,0,0.075)" stroke-width="1.5" fill="none" stroke-linejoin="round"/>
<path d="M246.00 417.00 L251.22 417.00 L256.44 417.00 L261.67 417.00 L266.89 417.00 L272.11 417.00 L277.33 417.00 L282.56 417.00 L287.78 417.00 L293.00 417.00 L298.22 417.00 L303.44 417.00 L308.67 417.00 L313.89 417.00 L319.11 417.00 L324.33 417.00 L329.56 417.00 L334.78 417.00 L340.00 417.00 L345.22 417.00 L350.44 417.00 L355.67 417.00 L360.89 417.00 L366.11 417.00 L371.33 417.00 L376.56 417.00 L381.78 417.00 L387.00 417.00 L392.22 417.00 L397.44 417.00 L402.67 417.00 L407.89 417.00 L413.11 417.00 L418.33 417.00 L423.56 417.00 L428.78 417.00 L434.00 417.00 L439.22 417.00 L444.44 417.00 L449.67 417.00 L454.89 417.00 L460.11 417.00 L465.33 417.00 L470.56 417.00 L475.78 417.00 L481.00 417.00 L486.22 417.00 L491.44 417.00 L496.67 417.00 L501.89 417.00 L507.11 417.00 L512.33 417.00 L517.56 417.00 L522.78 417.00 L528.00 417.00 L533.22 417.00 L538.44 417.00 L543.67 417.00 L548.89 417.00 L554.11 417.00 L559.33 417.00 L564.56 417.00 L569.78 417.00 L575.00 417.00 L580.22 417.00 L585.44 417.00 L590.67 417.00 L595.89 417.00 L601.11 417.00 L606.33 417.00 L611.56 417.00 L616.78 417.00 L622.00 417.00 L627.22 417.00 L632.44 417.00 L637.67 417.00 L642.89 417.00 L648.11 417.00 L653.33 417.00 L658.56 417.00 L663.78 417.00 L669.00 417.00 L674.22 417.00 L679.44 417.00 L684.67 417.00 L689.89 417.00 L695.11 417.00 L700.33 417.00 L705.56 417.00 L710.78 417.00 L716.00 417.00 L721.22 417.00 L726.44 417.00 L731.67 417.00 L736.89 417.00 L742.11 417.00 L747.33 417.00 L752.56 417.00 L757.78 417.00 L763.00 417.00" stroke="#c444dc" stroke-width="2" fill="none" stroke-linejoin="round"/>
</svg>
<div class="legend"></div>
<div class="lg" style="left:253px"><i style="background:#00ff00"></i></div><div class="lt" style="left:275.5px">CRCErrors</div>
<div class="lg" style="left:340px"><i style="background:#0044ff"></i></div><div class="lt" style="left:362.5px">UnderSizes</div>
<div class="lg" style="left:430px"><i style="background:#ff0000"></i></div><div class="lt" style="left:452.5px">OverSizes</div>
<div class="lg" style="left:511px"><i style="background:#ff9900"></i></div><div class="lt" style="left:533.5px">Fragment</div>
<div class="lg" style="left:590px"><i style="background:#00ffff"></i></div><div class="lt" style="left:612.5px">Jabber</div>
<div class="lg" style="left:654px"><i style="background:#ff00ff"></i></div><div class="lt" style="left:676.5px">Drop</div>
<div class="yl" style="top:413.5px">0</div>
<div class="yl" style="top:385.5px">10</div>
<div class="yl" style="top:358.5px">20</div>
<div class="yl" style="top:331.5px">30</div>
<div class="yl" style="top:303.5px">40</div>
<div class="yl" style="top:276.5px">50</div>
<div class="yl" style="top:249.5px">60</div>
<div class="yl" style="top:221.5px">70</div>
<div class="yl" style="top:194.5px">80</div>
<div class="yl" style="top:167.5px">90</div>
<div class="yl" style="top:140.5px">100</div>
<div class="xl" style="left:282.5px">14:35:00</div>
<div class="xl" style="left:386.5px">14:35:20</div>
<div class="xl" style="left:491.2px">14:35:40</div>
<div class="xl" style="left:595.5px">14:36:00</div>
<div class="xl" style="left:699.5px">14:36:20</div>
</body></html>
